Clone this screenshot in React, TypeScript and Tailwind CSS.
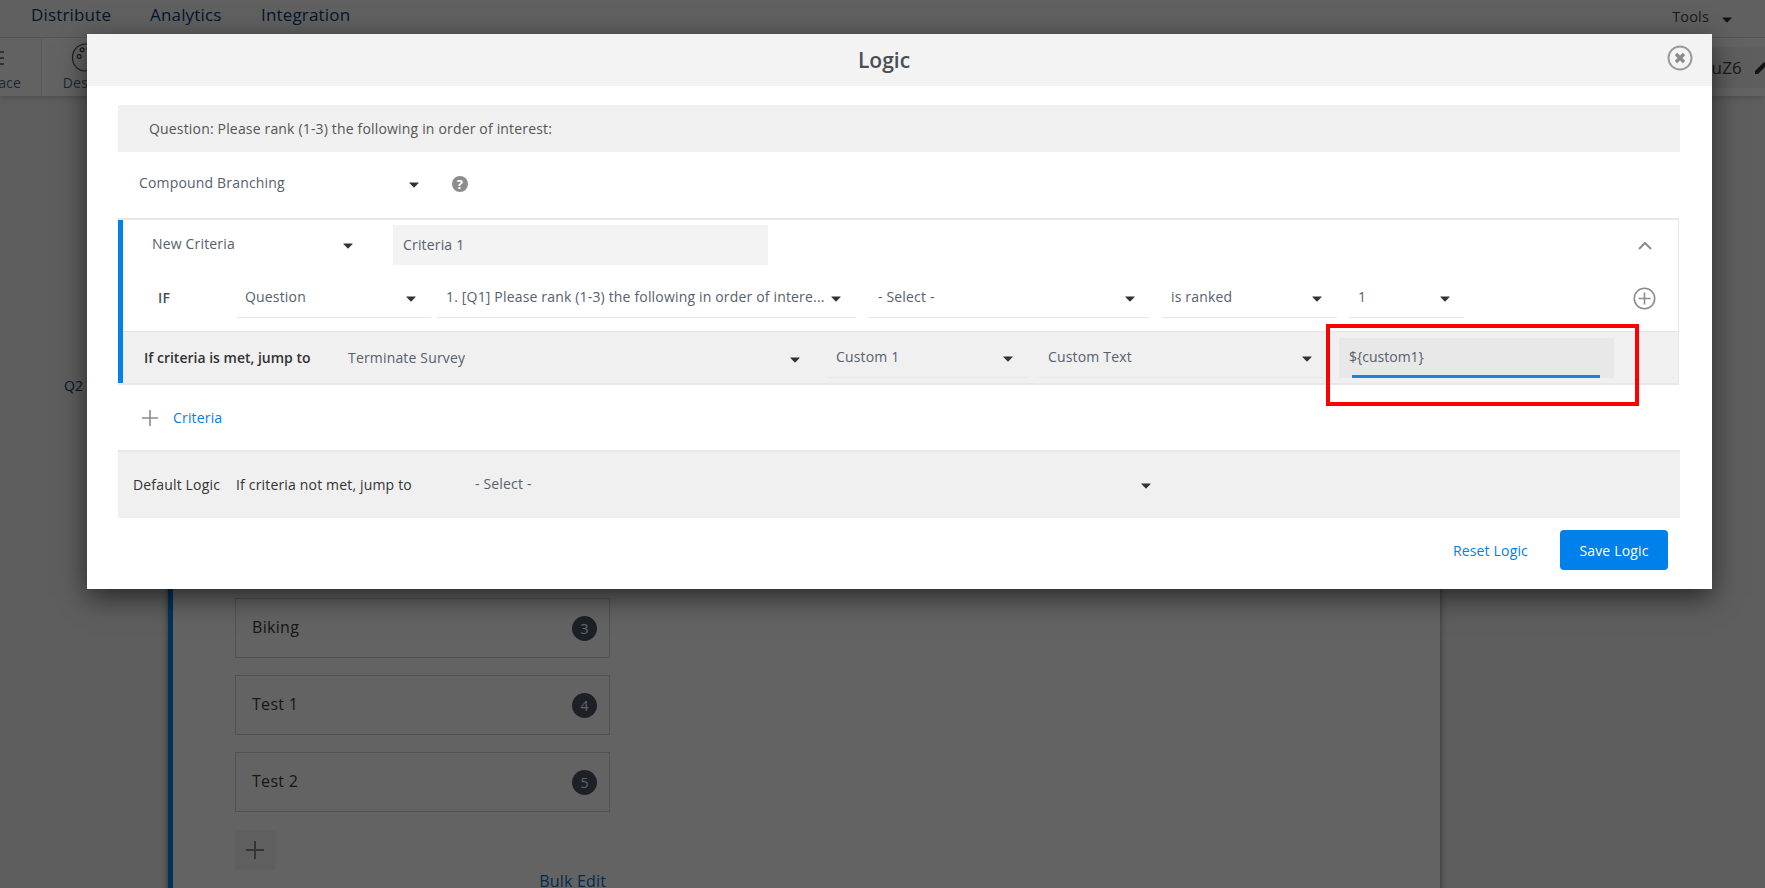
import React from "react";

const Caret = ({ className = "fill-[#333333]" }: { className?: string }) => (
  <svg width="10" height="6" viewBox="0 0 10 6" className={`mt-[2px] shrink-0 ${className}`}>
    <path d="M0.6 0.4 H9.4 Q9.9 0.4 9.6 0.9 L5.5 5.3 Q5 5.8 4.5 5.3 L0.4 0.9 Q0.1 0.4 0.6 0.4 Z" />
  </svg>
);

type SelectProps = { label: string; w: string; pad: string; line?: boolean; h?: string };
const Select = ({ label, w, pad, line = true, h = "h-[39px]" }: SelectProps) => (
  <div
    className={`flex shrink-0 items-center justify-between ${h} ${w} ${pad} ${line ? "border-b border-[#e6e6e6]" : ""}`}
  >
    <span className="truncate pb-[3px] text-[#56606e]">{label}</span>
    <Caret />
  </div>
);

const RankItem = ({ label, n }: { label: string; n: number }) => (
  <div className="flex h-[60px] w-[375px] items-center justify-between border border-[#d4d4d4] pl-[16px] pr-[12px]">
    <span className="pb-[2px] text-[16px] tracking-[0.3px] text-[#3c3c3c]">{label}</span>
    <span className="flex h-[25px] w-[25px] items-center justify-center rounded-full bg-[#4a5568] text-[14px] text-white">
      {n}
    </span>
  </div>
);

export default function App() {
  return (
    <div className="relative h-[888px] w-[1765px] overflow-hidden bg-[#f1f1f1] font-['Open_Sans','Liberation_Sans',sans-serif] text-[14px] tracking-[0.17px]">
      {/* page beneath */}
      <div className="flex h-[37px] items-center bg-[#f8f8f8] pl-[31px] pr-[33px] text-[17px] text-[#0b3a72]">
        <span className="w-[119px] pb-[8px]">Distribute</span>
        <span className="w-[111px] pb-[8px]">Analytics</span>
        <span className="pb-[8px]">Integration</span>
        <span className="ml-auto mr-[13px] pb-[4px] text-[14.5px] text-[#444444]">Tools</span>
        <Caret />
      </div>
      <div className="flex h-[59px] border-t border-[#d8d8d8] bg-white shadow-md">
        <div className="flex w-[41px] flex-col items-end justify-between overflow-hidden bg-[#fbfbfb] pb-[3px] pr-[20px] pt-[12px] text-[#4d6a88]">
          <svg width="4" height="16" viewBox="0 0 4 16" className="-mr-[16px] self-start" stroke="#555555" strokeWidth="1.4">
            <path d="M0 2 H4 M0 8 H4 M0 14 H4" />
          </svg>
          <span>Workspace</span>
        </div>
        <div className="flex w-[88px] flex-col items-center justify-between border-l border-[#e8e8e8] pb-[3px] pt-[5px] text-[#4d6a88]">
          <svg width="30" height="30" viewBox="0 0 30 30" fill="none" stroke="#444444" strokeWidth="1.2">
            <path d="M15 1 C7 1 1 7 1 15 C1 23 7 29 14 29 C18 29 17 25 17 23 C17 20 20 19 23 19 C27 19 29 17 29 14 C29 7 23 1 15 1 Z" />
            <circle cx="8" cy="14" r="2" />
            <circle cx="11" cy="7" r="2" />
            <circle cx="18" cy="6" r="2" />
          </svg>
          <span>Design</span>
        </div>
        <div className="ml-auto mt-[9px] flex h-[41px] w-[300px] items-center justify-end gap-[12px] bg-[#f3f3f3] text-[17px] text-[#444444]">
          <span>BuZ6</span>
          <svg width="14" height="14" viewBox="0 0 14 14" className="-mr-[3px] fill-[#333333]">
            <path d="M10 1 L13 4 L4 13 L1 13 L1 10 Z" />
          </svg>
        </div>
      </div>
      <div className="flex">
        <div className="w-[168px] pl-[64px] pt-[279px] text-[#0b3a72]">Q2</div>
        <div className="h-[800px] w-[1272px] border-l-[5px] border-[#0080ea] bg-white pl-[62px] pt-[502px] shadow-[0_0_6px_rgba(0,0,0,0.5)]">
          <div className="flex w-[375px] flex-col gap-[17px]">
            <RankItem label="Biking" n={3} />
            <RankItem label="Test 1" n={4} />
            <RankItem label="Test 2" n={5} />
            <div className="mt-[1px] flex h-[40px] w-[40px] items-center justify-center bg-[#f4f4f4]">
              <svg width="20" height="20" viewBox="0 0 20 20" className="stroke-[#888888]" strokeWidth="2">
                <path d="M10 1 V19 M1 10 H19" />
              </svg>
            </div>
            <div className="-mt-[14px] w-[371px] text-right text-[16px] leading-[16px] text-[#0b6fc9]">Bulk Edit</div>
          </div>
        </div>
      </div>

      {/* dim layer */}
      <div className="absolute inset-0 bg-black/[0.61]" />

      {/* modal */}
      <div className="absolute left-[87px] top-[34px] h-[555px] w-[1625px] bg-white shadow-[0_8px_26px_rgba(0,0,0,0.6)]">
        <div className="relative flex h-[52px] items-center justify-center bg-[#f3f3f3] pr-[31px] pt-[1px]">
          <span className="text-[21px] font-semibold tracking-normal text-[#4a4f55]">Logic</span>
          <svg
            width="26"
            height="26"
            viewBox="0 0 26 26"
            className="absolute right-[19px] top-[11px]"
          >
            <circle cx="13" cy="13" r="11.5" fill="none" stroke="#9a9a9a" strokeWidth="2" />
            <path d="M9 9 L17 17 M17 9 L9 17" stroke="#8a8a8a" strokeWidth="3.2" />
          </svg>
        </div>

        <div className="pl-[31px] pr-[32px] pt-[19px]">
          <div className="flex h-[47px] items-center bg-[#f0f0f0] pl-[31px] text-[#555555]">
            Question: Please rank (1-3) the following in order of interest:
          </div>

          <div className="flex h-[66px] items-center pb-[3px] pl-[21px]">
            <Select label="Compound Branching" w="w-[280px]" pad="" line={false} />
            <svg width="16" height="16" viewBox="0 0 16 16" className="ml-[33px]">
              <circle cx="8" cy="8" r="8" fill="#8c8c8c" />
              <text x="8" y="12.5" textAnchor="middle" fontSize="13" fontWeight="700" fill="#ffffff">
                ?
              </text>
            </svg>
          </div>

          <div className="mr-[1px] border-b-2 border-r border-t-2 border-[#e8e8e8]">
            <div className="border-l-[5px] border-[#0080ea]">
              <div className="flex items-center pl-[29px] pr-[26px] pt-[5px]">
                <Select label="New Criteria" w="w-[201px]" pad="" line={false} h="h-[40px]" />
                <div className="ml-[40px] flex h-[40px] w-[375px] items-center bg-[#f3f3f3] pb-[2px] pl-[10px] text-[#56606e]">
                  Criteria 1
                </div>
                <svg width="14" height="9" viewBox="0 0 14 9" className="ml-auto" fill="none" stroke="#8c8c8c" strokeWidth="2">
                  <path d="M1 8 L7 2 L13 8" />
                </svg>
              </div>

              <div className="mb-[13px] mt-[14px] flex items-center pl-[35px] pr-[22px]">
                <span className="w-[79px] pb-[2px] font-semibold text-[#4a4f55]">IF</span>
                <Select label="Question" w="w-[194px]" pad="pl-[8px] pr-[15px]" />
                <Select label="1. [Q1] Please rank (1-3) the following in order of intere..." w="ml-[6px] w-[419px]" pad="pl-[9px] pr-[15px]" />
                <Select label="- Select -" w="ml-[12px] w-[281px]" pad="pl-[10px] pr-[14px]" />
                <Select label="is ranked" w="ml-[13px] w-[175px]" pad="pl-[9px] pr-[15px]" />
                <Select label="1" w="ml-[12px] w-[115px]" pad="pl-[9px] pr-[14px]" />
                <svg width="23" height="23" viewBox="0 0 23 23" className="ml-auto" fill="none" stroke="#8c8c8c" strokeWidth="1.6">
                  <circle cx="11.5" cy="11.5" r="10.2" />
                  <path d="M11.5 5.5 V17.5 M5.5 11.5 H17.5" />
                </svg>
              </div>

              <div className="flex h-[52px] items-end border-t border-[#e4e4e4] bg-[#f0f0f0] pb-[5px] pl-[21px]">
                <span className="flex h-[39px] w-[196px] items-center pb-[3px] font-semibold tracking-normal text-[#333333]">
                  If criteria is met, jump to
                </span>
                <Select label="Terminate Survey" w="w-[475px]" pad="pl-[8px] pr-[15px]" line={false} />
                <Select label="Custom 1" w="ml-[12px] w-[200px]" pad="pl-[9px] pr-[14px]" />
                <Select label="Custom Text" w="ml-[12px] w-[285px]" pad="pl-[9px] pr-[12px]" />
                <div className="relative ml-[15px] flex h-[40px] w-[275px] items-center bg-[#e8e8e8] pb-[3px] pl-[10px] tracking-normal text-[#56606e]">
                  ${"{custom1}"}
                  <div className="absolute bottom-0 left-[13px] h-[3px] w-[248px] bg-[#1a82e2]" />
                </div>
              </div>
            </div>
          </div>

          <div className="flex h-[65px] items-center pl-[24px]">
            <svg width="16" height="16" viewBox="0 0 16 16" fill="none" stroke="#8c8c8c" strokeWidth="1.6">
              <path d="M8 0 V16 M0 8 H16" />
            </svg>
            <span className="ml-[15px] text-[#0080ea]">Criteria</span>
          </div>

          <div className="flex h-[68px] items-center border-t-2 border-[#e8e8e8] bg-[#f0f0f0] pl-[15px] text-[#333333]">
            <span className="w-[103px] pb-[2px]">Default Logic</span>
            <span className="w-[239px] pb-[2px]">If criteria not met, jump to</span>
            <Select label="- Select -" w="w-[676px]" pad="" line={false} />
          </div>

          <div className="flex items-center justify-end gap-[32px] pr-[12px] pt-[12px]">
            <span className="font-medium text-[#0080ea]">Reset Logic</span>
            <span className="flex h-[40px] w-[108px] items-center justify-center rounded-[4px] bg-[#0080ea] font-medium text-white">
              Save Logic
            </span>
          </div>
        </div>
      </div>

      {/* red annotation */}
      <div className="absolute left-[1326px] top-[324px] h-[82px] w-[313px] border-4 border-[#ff0000]" />
    </div>
  );
}
